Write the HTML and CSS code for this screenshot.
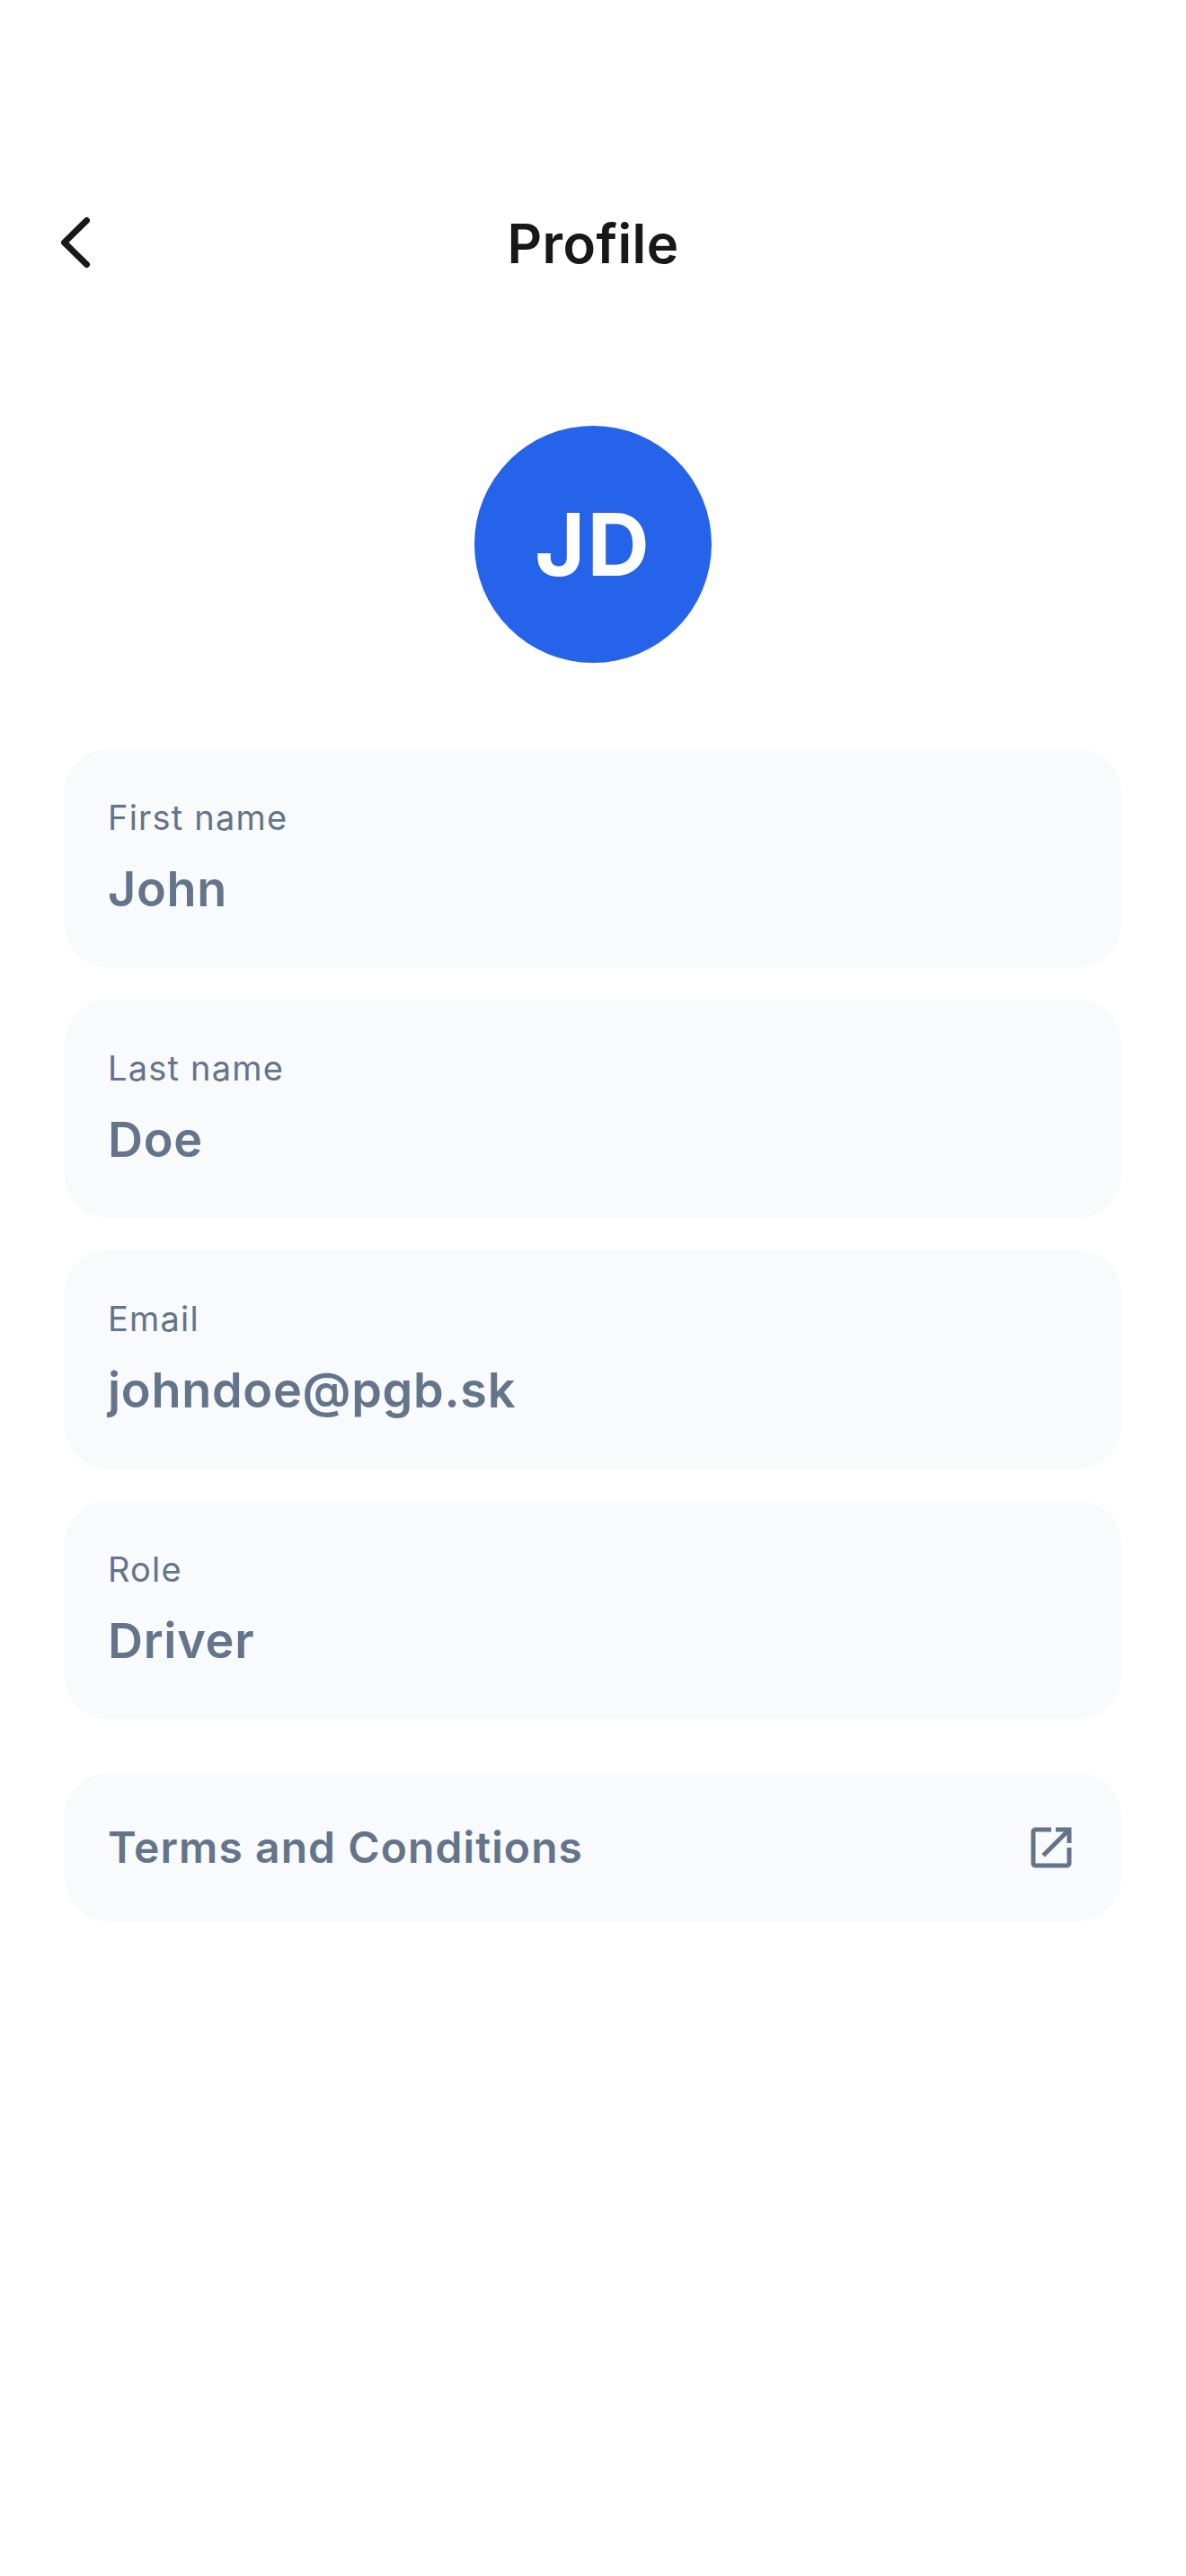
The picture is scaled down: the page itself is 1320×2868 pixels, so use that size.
FILE: index.html
```html
<!doctype html>
<html lang="en">
<head>
	<meta charset="UTF-8">
	<title>Profile</title>
	<link rel="stylesheet" href="styles.css">
</head>
<body>
<div class="page">
	<div class="header">
		<a class="back">
			<svg width="40" height="64" viewBox="0 0 40 64"><path d="M32.5 7.5 L7.5 32 L32.5 56.5"/></svg>
		</a>
		<h1>Profile</h1>
	</div>
	<div class="avatar">JD</div>
	<div class="fields">
		<div class="field">
			<div class="label">First name</div>
			<div class="value">John</div>
		</div>
		<div class="field">
			<div class="label">Last name</div>
			<div class="value">Doe</div>
		</div>
		<div class="field">
			<div class="label">Email</div>
			<div class="value">johndoe@pgb.sk</div>
		</div>
		<div class="field">
			<div class="label">Role</div>
			<div class="value">Driver</div>
		</div>
	</div>
	<div class="terms">
		<span>Terms and Conditions</span>
		<svg width="60" height="60" viewBox="0 0 24 24"><path d="M19 19H5V5h7V3H5c-1.11 0-2 .9-2 2v14c0 1.1.89 2 2 2h14c1.1 0 2-.9 2-2v-7h-2v7zM14 3v2h3.59l-9.83 9.83 1.41 1.41L19 6.41V10h2V3h-7z"/></svg>
	</div>
</div>
</body>
</html>
```

FILE: styles.css
```css
body{margin:0;background:#fff;font-family:Inter,"Liberation Sans",sans-serif;}
.page{width:1320px;height:2868px;padding:0 72px;box-sizing:border-box;}

.header{
	height:72px;
	padding-top:235px;
	display:flex;
	align-items:center;
	justify-content:center;
	position:relative;
}
.header h1{margin:0;font-size:60px;line-height:72px;font-weight:600;letter-spacing:.4px;color:#18181b;}
.back{position:absolute;left:-8px;top:238px;height:64px;}
.back svg{display:block;}
.back path{fill:none;stroke:#18181b;stroke-width:7;stroke-linecap:round;stroke-linejoin:round;}

.avatar{
	width:264px;
	height:264px;
	margin:167px auto 96px;
	border-radius:50%;
	background:#2563eb;
	color:#fff;
	font-size:96px;
	font-weight:700;
	letter-spacing:2px;
	display:flex;
	align-items:center;
	justify-content:center;
}

.fields{display:flex;flex-direction:column;gap:36px;}
.field{
	height:243px;
	box-sizing:border-box;
	padding:49px 48px 0;
	background:#f8fafc;
	border-radius:48px;
}
.label{font-size:38px;line-height:54px;letter-spacing:1.2px;color:#64748b;}
.value{font-size:54px;line-height:72px;margin-top:17px;letter-spacing:.7px;font-weight:600;color:#64748b;}

.terms{
	height:165px;
	box-sizing:border-box;
	margin-top:60px;
	padding:0 48px;
	background:#f8fafc;
	border-radius:48px;
	display:flex;
	align-items:center;
	justify-content:space-between;
	font-size:48px;
	font-weight:600;
	letter-spacing:1.08px;
	color:#64748b;
}
.terms svg{fill:#64748b;}
```
